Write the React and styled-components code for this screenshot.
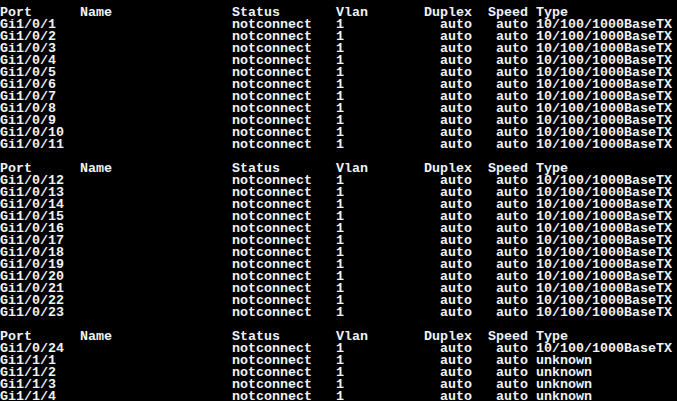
import React from "react";
import styled, { createGlobalStyle } from "styled-components";

const Global = createGlobalStyle`
  html, body { margin: 0; padding: 0; background: #000; }
  body { width: 677px; height: 401px; overflow: hidden; }
`;

const Console = styled.div`
  width: 677px;
  height: 401px;
  box-sizing: border-box;
  background: #000;
  color: #f2f2f2;
  font-family: "Liberation Mono", "DejaVu Sans Mono", monospace;
  font-weight: bold;
  font-size: 13.3333px;
  line-height: 12px;
  padding-top: 7px;
  display: flex;
  flex-direction: column;
  gap: 12px;
  overflow: hidden;
  white-space: pre;
`;

const Block = styled.div`
  display: flex;
  flex-direction: column;
`;

const Row = styled.div`
  display: grid;
  grid-template-columns: 80px 152px 104px 88px 48px 64px auto;
  height: 12px;
`;

const Cell = styled.span`
  text-align: ${(p) => (p.$right ? "right" : "left")};
  padding-right: ${(p) => (p.$pad ? "8px" : "0")};
`;

const header = ["Port", "Name", "Status", "Vlan", "Duplex", "Speed", "Type"];

const makeRows = (ports, types) =>
  ports.map((p, i) => [p, "", "notconnect", "1", "auto", "auto", types ? types[i] : "10/100/1000BaseTX"]);

const blocks = [
  makeRows(Array.from({ length: 11 }, (_, i) => `Gi1/0/${i + 1}`)),
  makeRows(Array.from({ length: 12 }, (_, i) => `Gi1/0/${i + 12}`)),
  makeRows(
    ["Gi1/0/24", "Gi1/1/1", "Gi1/1/2", "Gi1/1/3", "Gi1/1/4"],
    ["10/100/1000BaseTX", "unknown", "unknown", "unknown", "unknown"]
  ),
];

function Line({ cols }) {
  return (
    <Row>
      <Cell>{cols[0]}</Cell>
      <Cell>{cols[1]}</Cell>
      <Cell>{cols[2]}</Cell>
      <Cell>{cols[3]}</Cell>
      <Cell $right>{cols[4]}</Cell>
      <Cell $right $pad>{cols[5]}</Cell>
      <Cell>{cols[6]}</Cell>
    </Row>
  );
}

export default function App() {
  return (
    <>
      <Global />
      <Console>
        {blocks.map((rows, b) => (
          <Block key={b}>
            <Line cols={header} />
            {rows.map((r) => (
              <Line key={r[0]} cols={r} />
            ))}
          </Block>
        ))}
      </Console>
    </>
  );
}
